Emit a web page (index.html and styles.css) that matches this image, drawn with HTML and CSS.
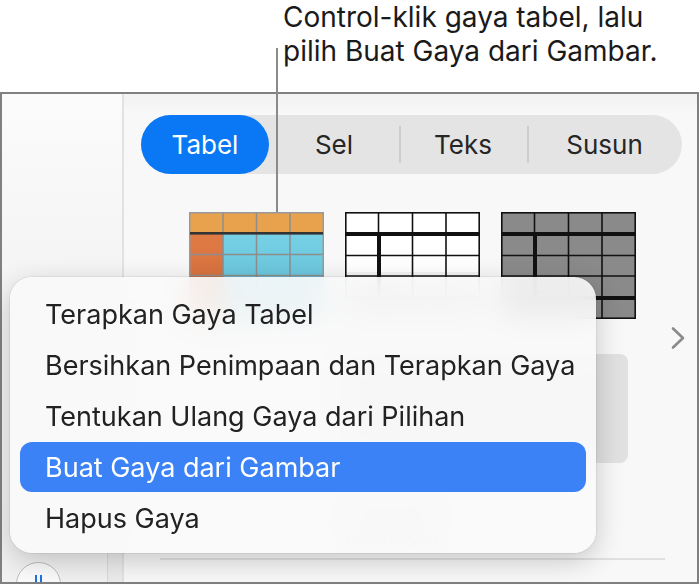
FILE: index.html
```html
<!DOCTYPE html>
<html lang="id">
<head>
<meta charset="UTF-8" />
<meta name="viewport" content="width=device-width, initial-scale=1.0" />
<title>Buat Gaya dari Gambar</title>
<link rel="stylesheet" href="styles.css">
</head>
<body>

<!-- Keterangan -->
<div class="callout">
    <p>Control-klik gaya tabel, lalu<br>pilih Buat Gaya dari Gambar.</p>
</div>
<div class="leader"></div>

<!-- Jendela aplikasi -->
<div class="window">
    <div class="sidebar">
        <div class="sidebar-footer">
            <div class="round-button"><span></span><span></span></div>
            <div class="sidebar-rail"></div>
        </div>
    </div>

    <div class="inspector">
        <div class="tabs">
            <div class="tab tab-tabel active">Tabel</div>
            <div class="tab tab-sel">Sel</div>
            <div class="tab tab-teks">Teks</div>
            <div class="tab tab-susun">Susun</div>
        </div>

        <div class="styles-row">
            <!-- gaya 1: oranye / biru -->
            <svg class="thumb" width="135" height="107" viewBox="0 0 135 107">
                <defs>
                    <linearGradient id="blueFill" x1="0" y1="0" x2="0" y2="1">
                        <stop offset="0" stop-color="#76d1e6"/>
                        <stop offset="1" stop-color="#5fbcd3"/>
                    </linearGradient>
                    <linearGradient id="orangeFill" x1="0" y1="0" x2="0" y2="1">
                        <stop offset="0" stop-color="#e07a45"/>
                        <stop offset="1" stop-color="#cf6a38"/>
                    </linearGradient>
                </defs>
                <rect x="0" y="0" width="135" height="21" fill="#e8a24e"/>
                <rect x="0" y="21" width="34" height="86" fill="url(#orangeFill)"/>
                <rect x="34" y="21" width="101" height="86" fill="url(#blueFill)"/>
                <g stroke="#8d8d8d" stroke-width="1.5">
                    <line x1="34" y1="0" x2="34" y2="107"/>
                    <line x1="67.5" y1="0" x2="67.5" y2="107"/>
                    <line x1="101" y1="0" x2="101" y2="107"/>
                    <line x1="0" y1="42.5" x2="135" y2="42.5"/>
                    <line x1="0" y1="63.5" x2="135" y2="63.5"/>
                    <line x1="0" y1="85" x2="135" y2="85"/>
                </g>
                <rect x="0.75" y="0.75" width="133.5" height="105.5" fill="none" stroke="#999" stroke-width="1.5"/>
                <rect x="1" y="20" width="133" height="2.6" fill="#333"/>
            </svg>

            <!-- gaya 2: putih -->
            <svg class="thumb" width="135" height="107" viewBox="0 0 135 107">
                <rect x="0" y="0" width="135" height="107" fill="#ffffff"/>
                <rect x="0" y="60" width="135" height="47" fill="#f3f3f3"/>
                <g stroke="#111" stroke-width="1.6">
                    <line x1="33.5" y1="0" x2="33.5" y2="20"/>
                    <line x1="33.5" y1="88" x2="33.5" y2="107"/>
                    <line x1="67.5" y1="0" x2="67.5" y2="107"/>
                    <line x1="101" y1="0" x2="101" y2="107"/>
                    <line x1="0" y1="43.5" x2="135" y2="43.5"/>
                    <line x1="0" y1="64" x2="135" y2="64"/>
                </g>
                <rect x="0" y="20" width="135" height="4" fill="#111"/>
                <rect x="0" y="84" width="135" height="4" fill="#111"/>
                <rect x="32" y="24" width="4" height="60" fill="#111"/>
                <rect x="0.8" y="0.8" width="133.4" height="105.4" fill="none" stroke="#111" stroke-width="1.6"/>
            </svg>

            <!-- gaya 3: abu-abu -->
            <svg class="thumb" width="135" height="107" viewBox="0 0 135 107">
                <rect x="0" y="0" width="135" height="107" fill="#8a8a8a"/>
                <g stroke="#111" stroke-width="1.6">
                    <line x1="33.5" y1="0" x2="33.5" y2="20"/>
                    <line x1="33.5" y1="88" x2="33.5" y2="107"/>
                    <line x1="67.5" y1="0" x2="67.5" y2="107"/>
                    <line x1="101" y1="0" x2="101" y2="107"/>
                    <line x1="0" y1="43.5" x2="135" y2="43.5"/>
                    <line x1="0" y1="64" x2="135" y2="64"/>
                </g>
                <rect x="0" y="20" width="135" height="4" fill="#111"/>
                <rect x="0" y="84" width="135" height="4" fill="#111"/>
                <rect x="32" y="24" width="4" height="60" fill="#111"/>
                <rect x="0.8" y="0.8" width="133.4" height="105.4" fill="none" stroke="#111" stroke-width="1.6"/>
            </svg>
        </div>

        <div class="pager">
            <svg width="16" height="24" viewBox="0 0 16 24">
                <path d="M3 2.5 L13 12 L3 21.5" fill="none" stroke="#8a8a8a" stroke-width="2.6" stroke-linecap="round" stroke-linejoin="round"/>
            </svg>
        </div>

        <div class="options-box"></div>

        <div class="faint-labels">
            <span>Judul tabel</span>
            <span>Keterangan</span>
        </div>

        <div class="bottom-rule"></div>
    </div>
</div>

<!-- Menu konteks -->
<div class="menu">
    <div class="menu-item">Terapkan Gaya Tabel</div>
    <div class="menu-item">Bersihkan Penimpaan dan Terapkan Gaya</div>
    <div class="menu-item">Tentukan Ulang Gaya dari Pilihan</div>
    <div class="menu-item selected">Buat Gaya dari Gambar</div>
    <div class="menu-item">Hapus Gaya</div>
</div>

</body>
</html>
```

FILE: styles.css
```css
* {
    box-sizing: border-box;
}
body {
    margin: 0;
    width: 700px;
    height: 585px;
    overflow: hidden;
    position: relative;
    background-color: #ffffff;
    font-family: Inter, "Noto Sans", sans-serif;
    color: #1d1d1f;
}

/* keterangan di atas */
.callout {
    height: 92px;
    padding: 0 0 0 283px;
    font-size: 28px;
    line-height: 34px;
    color: #1a1a1a;
}
.callout p {
    margin: 0;
}
.leader {
    position: absolute;
    left: 276px;
    top: 48px;
    width: 2px;
    height: 164px;
    background-color: #8a8a8a;
    z-index: 2;
}

/* jendela */
.window {
    width: 699px;
    height: 492px;
    border: 2px solid #808080;
    display: flex;
    overflow: hidden;
    background-color: #f7f7f7;
}
.sidebar {
    width: 122px;
    flex-shrink: 0;
    border-right: 2px solid #e2e2e2;
    background: linear-gradient(180deg, #fbfbfb 0%, #f3f3f3 45%, #f1f1f1 100%);
    display: flex;
    flex-direction: column;
    justify-content: flex-end;
}
.sidebar-footer {
    height: 30px;
    display: flex;
    justify-content: space-between;
    align-items: flex-start;
}
.round-button {
    width: 45px;
    height: 45px;
    margin: 10px 0 0 14px;
    border-radius: 50%;
    border: 1px solid #bdbdbd;
    background-color: #fbfbfb;
    display: flex;
    justify-content: center;
    gap: 3px;
    padding-top: 12px;
    flex-shrink: 0;
}
.round-button span {
    width: 2px;
    height: 9px;
    background-color: #1a73e8;
}
.sidebar-rail {
    width: 15px;
    height: 30px;
    border-left: 1.5px solid #dadada;
    background-color: #ececec;
}

.inspector {
    flex: 1;
    display: flex;
    flex-direction: column;
    background: linear-gradient(180deg, #f2f2f2 0px, #f8f8f8 20px, #f8f8f8 100%);
}

/* segmen */
.tabs {
    margin: 21px 0 0 17px;
    width: 541px;
    height: 59px;
    border-radius: 30px;
    background-color: #e4e4e4;
    display: flex;
    align-items: stretch;
}
.tab {
    display: flex;
    align-items: center;
    justify-content: center;
    font-size: 26px;
    color: #262626;
    position: relative;
}
.tab-tabel { width: 128px; }
.tab-sel { width: 130px; }
.tab-teks { width: 128px; }
.tab-susun { width: 155px; }
.tab-teks::before,
.tab-susun::before {
    content: "";
    position: absolute;
    left: 0;
    top: 11px;
    bottom: 11px;
    width: 1.5px;
    background-color: #cdcdcd;
}
.tab.active {
    background-color: #0a78f5;
    color: #ffffff;
    border-radius: 30px;
}

/* gaya tabel */
.styles-row {
    margin-top: 38px;
    padding-left: 65px;
    display: flex;
    gap: 21px;
}
.thumb {
    display: block;
    flex-shrink: 0;
}
.pager {
    display: flex;
    justify-content: flex-end;
    padding-right: 11px;
    margin-top: 7px;
}
.pager svg {
    display: block;
}
.options-box {
    margin: 4px 0 0 216px;
    width: 288px;
    height: 109px;
    border-radius: 8px;
    background-color: #e1e1e1;
}
.faint-labels {
    margin: 34px 0 0 222px;
    display: flex;
    flex-direction: column;
    gap: 10px;
    font-size: 17px;
    color: #9a9a9a;
}
.bottom-rule {
    margin: auto 0 22px 36px;
    width: 505px;
    height: 2px;
    background-color: #e0e0e0;
}

/* menu konteks */
.menu {
    position: absolute;
    left: 10px;
    top: 277px;
    width: 586px;
    height: 276px;
    padding: 12px 10px 0;
    border-radius: 22px;
    background-color: rgba(249, 249, 249, 0.9);
    backdrop-filter: blur(14px);
    box-shadow: 0 0 0 1px rgba(0, 0, 0, 0.06), 0 8px 28px rgba(0, 0, 0, 0.2);
    z-index: 3;
}
.menu-item {
    height: 51px;
    padding-left: 25px;
    display: flex;
    align-items: center;
    font-size: 27px;
    color: #222222;
    border-radius: 12px;
}
.menu-item.selected {
    background-color: #3b82f7;
    color: #ffffff;
    height: 50px;
    margin-bottom: 1px;
}
```
